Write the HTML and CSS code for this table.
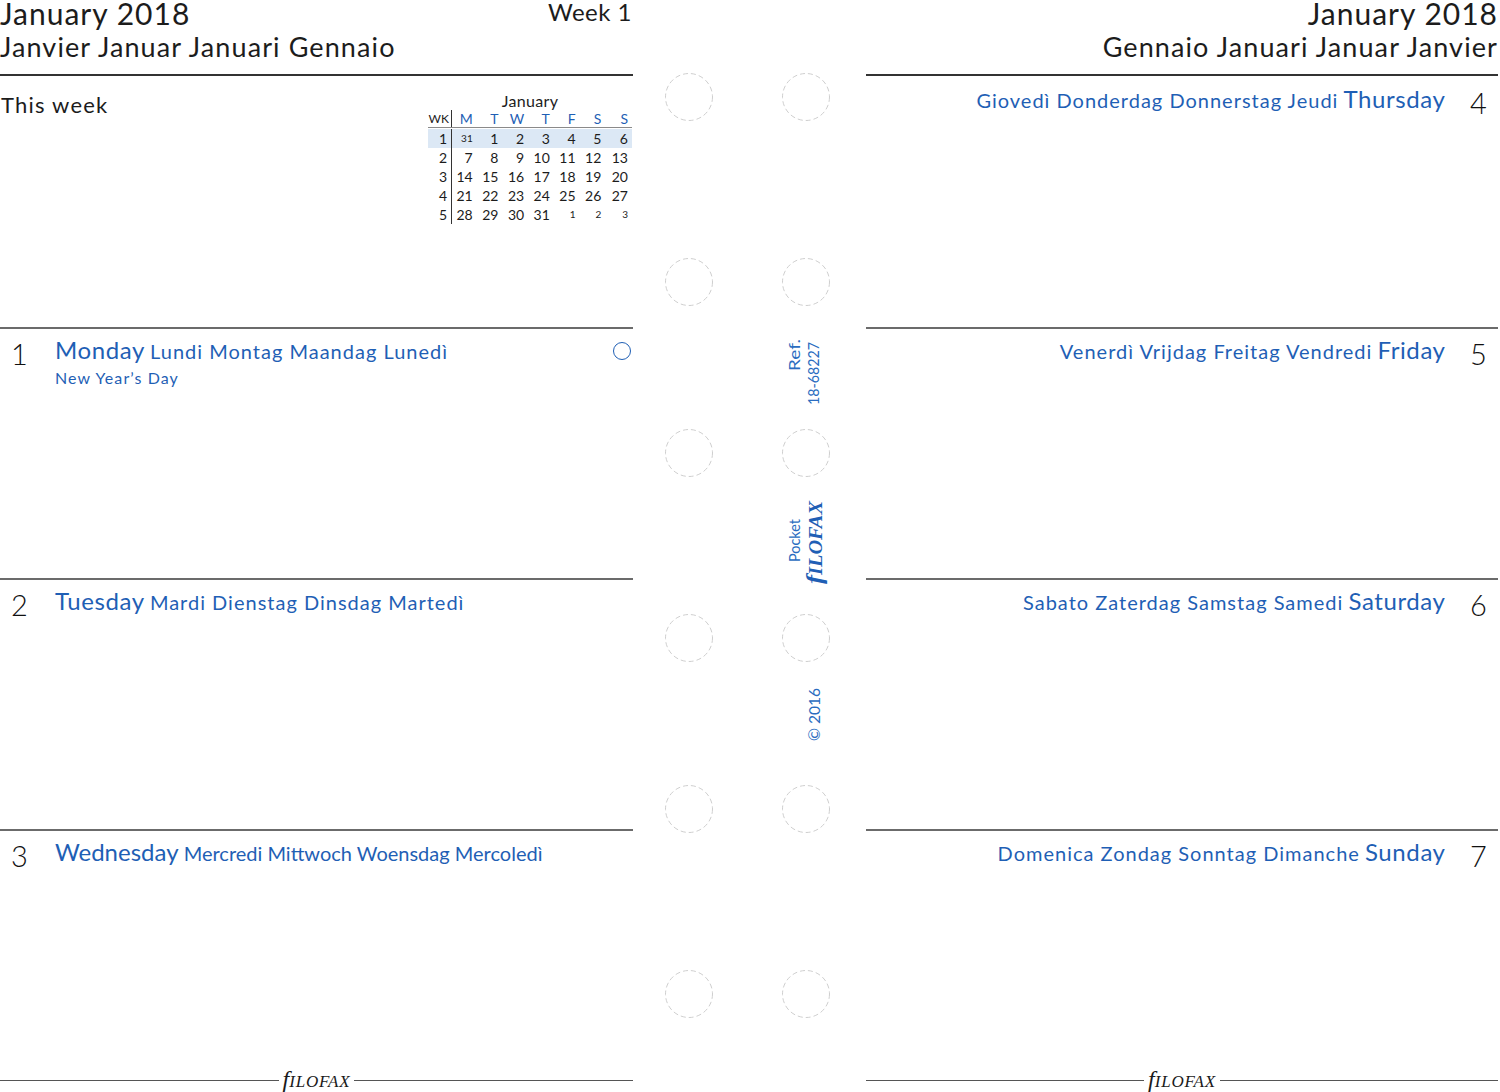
FILE: index.html
```html
<!DOCTYPE html>
<html lang="en">
<head>
<meta charset="utf-8">
<title>Filofax Pocket Week on Two Pages – January 2018</title>
<link rel="stylesheet" href="styles.css">
</head>
<body>
<div class="spread">
  <section class="page left">
    <header class="head">
      <div class="titles">
        <div class="t1">January 2018</div>
        <div class="t2">Janvier Januar Januari Gennaio</div>
      </div>
      <div class="weekno">Week 1</div>
    </header>

    <div class="block week">
      <div class="thisweek">This week</div>
      <div class="mini">
        <div class="mtitle">January</div>
        <div class="mrow mhead"><span class="wk">WK</span><span>M</span><span>T</span><span>W</span><span>T</span><span>F</span><span>S</span><span>S</span></div>
        <div class="mrow cur"><span class="wk">1</span><span class="sm">31</span><span>1</span><span>2</span><span>3</span><span>4</span><span>5</span><span>6</span></div>
        <div class="mrow"><span class="wk">2</span><span>7</span><span>8</span><span>9</span><span>10</span><span>11</span><span>12</span><span>13</span></div>
        <div class="mrow"><span class="wk">3</span><span>14</span><span>15</span><span>16</span><span>17</span><span>18</span><span>19</span><span>20</span></div>
        <div class="mrow"><span class="wk">4</span><span>21</span><span>22</span><span>23</span><span>24</span><span>25</span><span>26</span><span>27</span></div>
        <div class="mrow"><span class="wk">5</span><span>28</span><span>29</span><span>30</span><span>31</span><span class="sm">1</span><span class="sm">2</span><span class="sm">3</span></div>
      </div>
    </div>

    <div class="block day">
      <div class="dayhead">
        <span class="num">1</span>
        <div class="names">
          <div class="nline"><span class="en">Monday</span> <span class="tr">Lundi Montag Maandag Lunedì</span></div>
          <div class="holiday">New Year’s Day</div>
        </div>
        <span class="moon"></span>
      </div>
    </div>

    <div class="block day">
      <div class="dayhead">
        <span class="num">2</span>
        <div class="names">
          <div class="nline"><span class="en">Tuesday</span> <span class="tr">Mardi Dienstag Dinsdag Martedì</span></div>
        </div>
      </div>
    </div>

    <div class="block day">
      <div class="dayhead">
        <span class="num">3</span>
        <div class="names">
          <div class="nline tight"><span class="en">Wednesday</span> <span class="tr">Mercredi Mittwoch Woensdag Mercoledì</span></div>
        </div>
      </div>
    </div>

    <footer class="foot">
      <span class="rule"></span>
      <span class="logo"><span class="lf">f</span>ILOFAX</span>
      <span class="rule"></span>
    </footer>
  </section>

  <div class="spine">
    <svg class="spine-art" width="233" height="1092" viewBox="0 0 233 1092" xmlns="http://www.w3.org/2000/svg">
      <g class="holes">
        <circle cx="56" cy="97" r="23.5"/><circle cx="173" cy="97" r="23.5"/>
        <circle cx="56" cy="282" r="23.5"/><circle cx="173" cy="282" r="23.5"/>
        <circle cx="56" cy="453" r="23.5"/><circle cx="173" cy="453" r="23.5"/>
        <circle cx="56" cy="638" r="23.5"/><circle cx="173" cy="638" r="23.5"/>
        <circle cx="56" cy="809" r="23.5"/><circle cx="173" cy="809" r="23.5"/>
        <circle cx="56" cy="994" r="23.5"/><circle cx="173" cy="994" r="23.5"/>
      </g>
      <g class="spine-text">
        <text transform="translate(167 371) rotate(-90)" textLength="32" lengthAdjust="spacingAndGlyphs">Ref.</text>
        <text transform="translate(186 405) rotate(-90)" textLength="63" lengthAdjust="spacingAndGlyphs">18-68227</text>
        <text transform="translate(167 562) rotate(-90)" textLength="43" lengthAdjust="spacingAndGlyphs">Pocket</text>
        <text class="sl" transform="translate(189 584) rotate(-90)" textLength="83" lengthAdjust="spacingAndGlyphs"><tspan class="slf">f</tspan>ILOFAX</text>
        <text transform="translate(187 741) rotate(-90)" textLength="53" lengthAdjust="spacingAndGlyphs">© 2016</text>
      </g>
    </svg>
  </div>

  <section class="page right">
    <header class="head">
      <div class="titles">
        <div class="t1">January 2018</div>
        <div class="t2">Gennaio Januari Januar Janvier</div>
      </div>
    </header>

    <div class="block rday first">
      <div class="dayhead">
        <div class="names"><div class="nline"><span class="tr">Giovedì Donderdag Donnerstag Jeudi</span> <span class="en">Thursday</span></div></div>
        <span class="num">4</span>
      </div>
    </div>

    <div class="block rday day">
      <div class="dayhead">
        <div class="names"><div class="nline"><span class="tr">Venerdì Vrijdag Freitag Vendredi</span> <span class="en">Friday</span></div></div>
        <span class="num">5</span>
      </div>
    </div>

    <div class="block rday day">
      <div class="dayhead">
        <div class="names"><div class="nline"><span class="tr">Sabato Zaterdag Samstag Samedi</span> <span class="en">Saturday</span></div></div>
        <span class="num">6</span>
      </div>
    </div>

    <div class="block rday day">
      <div class="dayhead">
        <div class="names"><div class="nline"><span class="tr">Domenica Zondag Sonntag Dimanche</span> <span class="en">Sunday</span></div></div>
        <span class="num">7</span>
      </div>
    </div>

    <footer class="foot">
      <span class="rule"></span>
      <span class="logo"><span class="lf">f</span>ILOFAX</span>
      <span class="rule"></span>
    </footer>
  </section>
</div>
</body>
</html>
```

FILE: styles.css
```css
html, body {
  margin: 0;
  padding: 0;
  background: #ffffff;
}

body {
  width: 1500px;
  height: 1092px;
  overflow: hidden;
  font-family: Lato, "Open Sans", "DejaVu Sans", sans-serif;
  color: #1c1c1c;
}

.spread {
  display: flex;
  height: 1092px;
}

.page {
  display: flex;
  flex-direction: column;
  flex: none;
}

.left { width: 633px; }
.right { width: 632px; }

.spine {
  width: 233px;
  flex: none;
}

.spine-art { display: block; }

/* ---------- header ---------- */
.head {
  height: 74px;
  flex: none;
  border-bottom: 2px solid #333333;
  display: flex;
  justify-content: space-between;
}

.right .head {
  justify-content: flex-end;
  text-align: right;
}

.t1 {
  font-size: 30px;
  line-height: 27px;
  letter-spacing: 1px;
}

.t2 {
  font-size: 27px;
  line-height: 40px;
  letter-spacing: 1.1px;
}

.right .titles { padding-right: 1px; }
.right .titles .t1,
.right .titles .t2 { margin-right: -1px; }

.weekno {
  font-size: 24px;
  line-height: 24px;
  letter-spacing: 0.5px;
  padding-right: 1px;
}

/* ---------- blocks ---------- */
.block {
  height: 251px;
  box-sizing: border-box;
  flex: none;
}

.day {
  border-top: 2px solid #6b6b6b;
}

.week {
  display: flex;
  justify-content: space-between;
}

.thisweek {
  font-size: 22px;
  line-height: 22px;
  letter-spacing: 1.2px;
  margin-top: 18px;
  padding-left: 1px;
}

/* ---------- mini calendar ---------- */
.mini {
  width: 204px;
  margin-top: 15px;
  margin-right: 1px;
}

.mtitle {
  text-align: center;
  font-size: 16px;
  line-height: 19px;
  letter-spacing: 0.3px;
}

.mrow {
  display: grid;
  grid-template-columns: 24px repeat(7, 1fr);
  height: 19px;
  line-height: 19px;
  font-size: 14px;
}

.mrow span {
  text-align: right;
  padding-right: 5px;
}

.mrow span:last-child { padding-right: 4px; }

.mrow .wk {
  border-right: 1px solid #333333;
  padding-right: 4px;
}

.mhead {
  height: 17px;
  line-height: 17px;
  border-bottom: 1px solid #8a8a8a;
  color: #1f5fb5;
  margin-bottom: 1px;
}

.mhead .wk {
  font-size: 12px;
  color: #1c1c1c;
  padding-right: 2px;
}

.cur { background: #dce8f5; }

.mrow .sm { font-size: 10px; }

/* ---------- day heads ---------- */
.dayhead {
  display: flex;
  align-items: flex-start;
  padding-top: 7px;
}

.num {
  flex: none;
  font-size: 29px;
  line-height: 29px;
  font-weight: 300;
  color: #111111;
  margin-top: 3px;
}

.left .num {
  width: 44px;
  padding-left: 11px;
}

.names {
  flex: none;
  color: #1f5fb5;
  font-size: 20px;
  line-height: 28px;
}

.nline { white-space: nowrap; }

.en {
  font-size: 24px;
  letter-spacing: 0.6px;
}

.tr { letter-spacing: 1px; }

.tight .en,
.tight .tr { letter-spacing: 0; }

.holiday {
  font-size: 16px;
  line-height: 24px;
  letter-spacing: 1.1px;
  margin-top: 1px;
}

.moon {
  flex: none;
  width: 16px;
  height: 16px;
  border: 1.5px solid #1f5fb5;
  border-radius: 50%;
  margin-left: auto;
  margin-right: 2px;
  margin-top: 6px;
}

.rday .dayhead {
  justify-content: flex-end;
}

.rday .names { text-align: right; }

.rday .en { margin-right: -0.6px; }

.right .num {
  width: 28px;
  padding-left: 25px;
}

.first .dayhead { padding-top: 9px; }

/* ---------- footer ---------- */
.foot {
  display: flex;
  align-items: center;
  height: 24px;
  margin-top: -12px;
  flex: none;
}

.rule {
  flex: 1;
  height: 1px;
  background: #555555;
}

.logo {
  padding: 0 4px;
  font-family: "Liberation Serif", "DejaVu Serif", serif;
  font-style: italic;
  font-size: 17px;
  line-height: 24px;
  letter-spacing: 0.8px;
  color: #1a1a1a;
}

.logo .lf {
  font-size: 24px;
  letter-spacing: 0;
}

/* ---------- spine ---------- */
.holes circle {
  fill: none;
  stroke: #cfcfcf;
  stroke-width: 1;
  stroke-dasharray: 5 3;
}

.spine-text text {
  font-family: Lato, "Open Sans", sans-serif;
  font-size: 15px;
  fill: #2a6cc0;
}

.spine-text .sl {
  font-family: "Liberation Serif", "DejaVu Serif", serif;
  font-style: italic;
  font-weight: bold;
  font-size: 18px;
  fill: #1f5fb5;
}

.spine-text .slf { font-size: 24px; }
```
